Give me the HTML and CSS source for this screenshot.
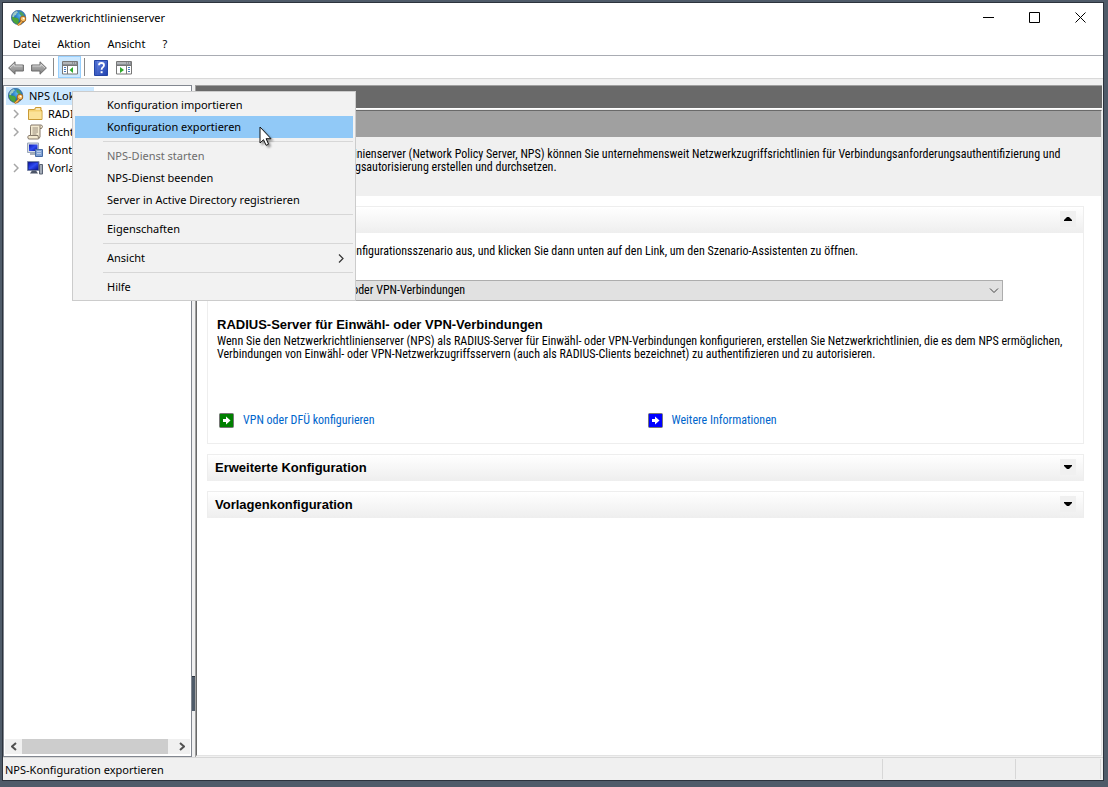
FILE: index.html
```html
<!DOCTYPE html>
<html lang="de">
<head>
<meta charset="utf-8">
<title>Netzwerkrichtlinienserver</title>
<link rel="stylesheet" href="styles.css">
</head>
<body>
<svg class="defs" aria-hidden="true">
  <defs>
    <radialGradient id="sea" cx="60%" cy="35%" r="75%"><stop offset="0" stop-color="#5db8ee"/><stop offset=".5" stop-color="#1f6fbe"/><stop offset="1" stop-color="#123c80"/></radialGradient>
    <linearGradient id="arrow" x1="0" y1="0" x2="0" y2="1"><stop offset="0" stop-color="#c4c4c4"/><stop offset="1" stop-color="#7d7d7d"/></linearGradient>
    <linearGradient id="help" x1="0" y1="0" x2="1" y2="1"><stop offset="0" stop-color="#6d8be6"/><stop offset="1" stop-color="#1d3fae"/></linearGradient>
    <linearGradient id="screen" x1="0" y1="0" x2="1" y2="1"><stop offset="0" stop-color="#0a17b0"/><stop offset=".5" stop-color="#2f4cf0"/><stop offset="1" stop-color="#0712a0"/></linearGradient>
    <symbol id="globe" viewBox="0 0 16 16">
      <circle cx="7.500" cy="7.500" r="7.200" fill="url(#sea)" stroke="#35628e" stroke-width=".6"/>
      <path d="M3 2.500Q4.500 1.200 6 1L7 2.500 5.500 3.500 5 5 3.500 5.500 3 7.500 1 7Q1.200 4 3 2.500z" fill="#9cc9c4"/>
      <path d="M1 6.500l2.500 1 3 .5 1.500 2L7 14.500Q2.500 13.500 1 9z" fill="#4aa43a"/>
      <path d="M8.500 1.500l2 .500 2 2 .500 2-2 .500-2.500-2.500z" fill="#4e9f5a"/>
      <circle cx="12" cy="9" r="2.800" fill="#f9c36a" stroke="#a9661b"/>
      <circle cx="12.600" cy="8.400" r=".9" fill="#fff"/>
      <path d="M10.300 10.700l-4 4 1.300 1 1.400-1.200.8.300.5-1.600 1.900-1.300z" fill="#f5b04c" stroke="#a9661b" stroke-width=".7"/>
    </symbol>
    <symbol id="back" viewBox="0 0 16 14">
      <path d="M.6 7L7 .8V4h8.400v6H7v3.200z" fill="url(#arrow)" stroke="#6b6b6b"/>
      <path d="M2 7l4-3.800V5h8.400" fill="none" stroke="#ddd" stroke-width=".8"/>
    </symbol>
    <symbol id="pane" viewBox="0 0 16 14">
      <path d="M.5 .5h15v12.500H.5z" fill="#fff" stroke="#777"/>
      <path d="M1 1h14v3H1z" fill="#8b8f94"/>
      <path d="M1 2h9M11 2h1M13 2h1" stroke="#eee" stroke-width=".8"/>
      <path d="M5.500 5v8M1 4.500h14" stroke="#777"/>
      <path d="M2 6.500h2M2 8.500h2M2 10.500h2" stroke="#4779bd"/>
    </symbol>
    <symbol id="chev" viewBox="0 0 6 10"><path d="M1 1l4 4-4 4" fill="none" stroke="currentColor" stroke-width="1.500"/></symbol>
  </defs>
</svg>
<div class="window">
  <header class="titlebar">
    <svg class="icon"><use href="#globe"/></svg>
    <h1 class="title">Netzwerkrichtlinienserver</h1>
    <button class="winbtn" aria-label="Minimieren"><svg width="11" height="11"><path d="M0 5.500h11" stroke="#000"/></svg></button>
    <button class="winbtn" aria-label="Maximieren"><svg width="11" height="11"><path d="M.5 .5h10v10H.5z" fill="none" stroke="#000"/></svg></button>
    <button class="winbtn" aria-label="Schließen"><svg width="11" height="11"><path d="M.5 .5l10 10M10.500 .5l-10 10" stroke="#000"/></svg></button>
  </header>
  <nav class="menubar">
    <button>Datei</button><button>Aktion</button><button>Ansicht</button><button>?</button>
  </nav>
  <div class="toolbar">
    <button class="tool" aria-label="Zurück"><svg width="16" height="14"><use href="#back"/></svg></button>
    <button class="tool" aria-label="Vorwärts"><svg class="flip" width="16" height="14"><use href="#back"/></svg></button>
    <span class="divider"></span>
    <button class="tool pressed" aria-label="Konsolenstruktur"><svg width="16" height="14"><use href="#pane"/><path d="M11 6v6L7.500 9z" fill="#2fa82c"/></svg></button>
    <span class="divider"></span>
    <button class="tool" aria-label="Hilfe"><svg width="14" height="16" viewBox="0 0 14 16"><path d="M.5 .5h13v15H.5z" fill="url(#help)" stroke="#2545a5"/><path d="M2 1v14" stroke="#3355bb"/><path d="M5 5.200Q5 3 7.500 3T10 5.300Q10 6.500 8.600 7.400 7.600 8 7.600 9.800" fill="none" stroke="#fff" stroke-width="1.800"/><path d="M6.600 11.200h2v2h-2z" fill="#fff"/></svg></button>
    <button class="tool" aria-label="Aktionsbereich"><svg width="16" height="14"><path d="M.5 .5h15v12.500H.5z" fill="#fff" stroke="#777"/><path d="M1 1h14v3H1z" fill="#8b8f94"/><path d="M1 2h9M11 2h1M13 2h1" stroke="#eee" stroke-width=".8"/><path d="M10.500 5v8M1 4.500h14" stroke="#777"/><path d="M12 6.500h2M12 8.500h2M12 10.500h2" stroke="#4779bd"/><path d="M4 6v6l4-3z" fill="#2fa82c"/></svg></button>
  </div>
  <main class="work">
    <aside class="tree">
      <ul class="nodes">
        <li class="node root"><svg class="icon"><use href="#globe"/></svg><span>NPS (Lokal)</span></li>
        <li class="node"><svg class="chev"><use href="#chev"/></svg><svg class="icon" viewBox="0 0 16 16"><path d="M1.500 3.500h6l1-2h5.500v3h1v9h-13.500z" fill="#f3cf70" stroke="#c99a35"/><path d="M2 5.500h12.500V13H2z" fill="#fbe297"/><path d="M9 3h4" stroke="#fff"/></svg><span>RADIUS-Clients</span></li>
        <li class="node"><svg class="chev"><use href="#chev"/></svg><svg class="icon" viewBox="0 0 16 16"><path d="M4 1h10.500l1 1.500-1 2H13V13l-1.500 2H1.500L.7 13l1-1.500H3.500V2.500z" fill="#f4ead0" stroke="#85796a"/><path d="M3.500 11.500H11l.5 3M13 4.500V1.500" fill="none" stroke="#85796a"/><path d="M5.500 4h5.500M5.500 6h5.500M5.500 8h5.500M5.500 10h4" stroke="#8e8575" stroke-width=".9"/></svg><span>Richtlinien</span></li>
        <li class="node"><span class="chev"></span><svg class="icon" viewBox="0 0 16 16"><path d="M.5 1h11v9.500H.5z" fill="#d6dce5" stroke="#9ba7b8"/><path d="M2 2.500h8.500v6.500H2z" fill="url(#screen)"/><path d="M3 12h6" stroke="#a8b0bb" stroke-width="2"/><path d="M8.500 7.500h7v7h-7z" fill="#7fa0d2" stroke="#456aa4"/><path d="M10 9.500h4M10 11.500h4" stroke="#b9cdea"/></svg><span>Kontoführung</span></li>
        <li class="node"><svg class="chev"><use href="#chev"/></svg><svg class="icon" viewBox="0 0 16 16"><path d="M.5 1.500h11.500v9H.5z" fill="#1a237e" stroke="#7c88a8"/><path d="M1.500 2.500H11V9.500H1.500z" fill="url(#screen)"/><path d="M5 10.500h4l2 3H3z" fill="#4c5568"/><path d="M12.500 4.500h3v9.500h-3z" fill="#a3abb7" stroke="#596273"/></svg><span>Vorlagenverwaltung</span></li>
      </ul>
      <div class="scrollbar">
        <button aria-label="Nach links"><svg class="flip" width="6" height="9"><path d="M1 1l4 3.500L1 8" fill="none" stroke="#505050" stroke-width="2"/></svg></button>
        <div class="track"><div class="thumb"></div></div>
        <button aria-label="Nach rechts"><svg width="6" height="9"><path d="M1 1l4 3.500L1 8" fill="none" stroke="#505050" stroke-width="2"/></svg></button>
      </div>
    </aside>
    <div class="splitter"><div class="grip"></div></div>
    <section class="details">
      <div class="band"></div>
      <div class="page">
        <div class="band2"></div>
        <p class="intro">Mit dem Netzwerkrichtlinienserver (Network Policy Server, NPS) können Sie unternehmensweit Netzwerkzugriffsrichtlinien für Verbindungsanforderungsauthentifizierung und Verbindungsanforderungsautorisierung erstellen und durchsetzen.</p>
        <div class="panels">
          <section class="panel">
            <div class="panelhead"><h2 class="hot">Standardkonfiguration</h2><button class="toggle" aria-label="Zuklappen"><svg width="8" height="4"><path d="M0 4V3L3 0h2l3 3v1z"/></svg></button></div>
            <div class="panelbody">
              <label for="scenario">Wählen Sie in der Liste ein Konfigurationsszenario aus, und klicken Sie dann unten auf den Link, um den Szenario-Assistenten zu öffnen.</label>
              <div class="combo">
                <select id="scenario"><option>RADIUS-Server für Einwähl- oder VPN-Verbindungen</option></select>
                <svg width="10" height="6"><path d="M1 .5l4 4 4-4" fill="none" stroke="#444"/></svg>
              </div>
              <h3>RADIUS-Server für Einwähl- oder VPN-Verbindungen</h3>
              <p class="desc">Wenn Sie den Netzwerkrichtlinienserver (NPS) als RADIUS-Server für Einwähl- oder VPN-Verbindungen konfigurieren, erstellen Sie Netzwerkrichtlinien, die es dem NPS ermöglichen, Verbindungen von Einwähl- oder VPN-Netzwerkzugriffsservern (auch als RADIUS-Clients bezeichnet) zu authentifizieren und zu autorisieren.</p>
              <div class="links">
                <a href="#vpn"><svg width="15" height="15"><rect x=".5" y=".5" width="14" height="14" rx="1" fill="#008000" stroke="#777"/><path d="M4 6h3V3.500L11.500 7.500 7 11.500V9H4z" fill="#fff"/></svg>VPN oder DFÜ konfigurieren</a>
                <a href="#info"><svg width="15" height="15"><rect x=".5" y=".5" width="14" height="14" rx="1" fill="#0000ff" stroke="#777"/><path d="M4 6h3V3.500L11.500 7.500 7 11.500V9H4z" fill="#fff"/></svg>Weitere Informationen</a>
              </div>
            </div>
          </section>
          <section class="panel closed">
            <div class="panelhead"><h2>Erweiterte Konfiguration</h2><button class="toggle" aria-label="Aufklappen"><svg width="8" height="4"><path d="M0 0v1l3 3h2l3-3V0z"/></svg></button></div>
          </section>
          <section class="panel closed">
            <div class="panelhead"><h2>Vorlagenkonfiguration</h2><button class="toggle" aria-label="Aufklappen"><svg width="8" height="4"><path d="M0 0v1l3 3h2l3-3V0z"/></svg></button></div>
          </section>
        </div>
      </div>
    </section>
  </main>
  <footer class="status"><span class="message">NPS-Konfiguration exportieren</span><span class="cell wide"></span><span class="cell last"></span></footer>
</div>
<div class="context" role="menu">
  <button role="menuitem">Konfiguration importieren</button>
  <button role="menuitem" class="active">Konfiguration exportieren</button>
  <hr>
  <button role="menuitem" disabled>NPS-Dienst starten</button>
  <button role="menuitem">NPS-Dienst beenden</button>
  <button role="menuitem">Server in Active Directory registrieren</button>
  <hr>
  <button role="menuitem">Eigenschaften</button>
  <hr>
  <button role="menuitem">Ansicht<svg width="6" height="9"><path d="M1 .5l4 4-4 4" fill="none" stroke="#333" stroke-width="1.200"/></svg></button>
  <hr>
  <button role="menuitem">Hilfe</button>
</div>
<svg class="pointer" width="14" height="22" viewBox="0 0 14 22"><path d="M1 1v16l3.500-3.300 2.600 5.600 2.500-1.100-2.500-5.500H12z" fill="#fff" stroke="#111"/></svg>
</body>
</html>
```
FILE: styles.css
```css
* { box-sizing: border-box; }
html, body { height: 100%; margin: 0; }
body {
  display: flex;
  padding: 2px 4px 6px 2px;
  background: #4f5b69;
  color: #000;
  font: 11px/18px "Noto Sans", "Open Sans", sans-serif;
}
button { padding: 0; border: 0; background: none; color: inherit; font: inherit; }
svg { display: block; flex: none; }
h1, h2, h3, p, ul { margin: 0; padding: 0; }
.defs { position: absolute; width: 0; height: 0; }
.icon { width: 16px; height: 16px; }
.flip { transform: scaleX(-1); }
.window {
  flex: 1;
  min-width: 0;
  display: flex;
  flex-direction: column;
  border: 1px solid #2c333d;
  background: #f0f0f0;
}
.titlebar { display: flex; align-items: center; height: 29px; padding-left: 8px; background: #fff; }
.title { flex: 1; padding-left: 5px; font-size: 11px; font-weight: 400; }
.winbtn { display: flex; align-items: center; justify-content: center; width: 46px; height: 29px; }
.menubar { display: flex; gap: 17px; height: 24px; padding: 3px 10px; border-bottom: 1px solid #a9acb3; background: #fff; }
.toolbar { display: flex; align-items: center; height: 23px; padding-left: 1px; border-bottom: 1px solid #d9d9d9; background: #fff; }
.tool { display: flex; align-items: center; justify-content: center; width: 23px; height: 22px; padding-top: 2px; }
.pressed { border: 1px solid #99d1ff; background: #cce8ff; }
.divider { width: 1px; height: 18px; margin: 0 4px 0 3px; background: #8a8a8a; }
.work { flex: 1; min-height: 0; display: flex; padding-top: 6px; }
.tree {
  flex: none;
  display: flex;
  flex-direction: column;
  justify-content: space-between;
  width: 189px;
  padding: 1px 1px 2px;
  border: 1px solid #828790;
  background: #fff;
  overflow: hidden;
}
.nodes { list-style: none; }
.node { display: flex; align-items: center; height: 18px; padding-left: 8px; white-space: nowrap; }
.node span:last-child { padding-left: 5px; }
.root { width: 88px; margin-left: 1px; padding-left: 2px; background: #cce8ff; overflow: hidden; }
.chev { width: 6px; height: 10px; margin-right: 8px; color: #a6a6a6; }
.scrollbar { display: flex; height: 15px; background: #f0f0f0; }
.scrollbar button { display: flex; align-items: center; justify-content: center; width: 17px; }
.track { flex: 1; }
.thumb { width: 97%; height: 100%; background: #cdcdcd; }
.splitter { display: flex; flex-direction: column; justify-content: flex-end; width: 3px; padding-bottom: 46px; }
.grip { height: 35px; border-top: 1px solid #2c333d; background: #4f5b69; }
.details {
  flex: 1;
  min-width: 0;
  display: flex;
  flex-direction: column;
  margin-right: 1px;
  padding-bottom: 1px;
  border-top: 1px solid #a0a0a0;
  border-left: 1px solid #a0a0a0;
  font: 12px/13px "Roboto Condensed", Roboto, Arial, sans-serif;
}
.band { height: 23px; border-bottom: 1px solid #fff; background: #696969; }
.page {
  flex: 1;
  border: 1px solid #696969;
  border-right-color: #e3e3e3;
  border-bottom-color: #e3e3e3;
  margin-top: 1px;
  background: #fff;
}
.band2 { height: 26px; background: #a0a0a0; }
.intro { height: 59px; padding: 11px 30px 0 47px; background: #f0f0f0; }
.panels { display: flex; flex-direction: column; gap: 10px; padding: 10px 17px 0 10px; }
.panel { border: 1px solid #eee; }
.closed { border-bottom: 0; }
.panelhead { display: flex; align-items: center; justify-content: space-between; height: 26px; padding: 0 7px 2px; background: linear-gradient(#fff, #eee); }
h2, h3 { font: bold 13px/15px "Liberation Sans", Arial, sans-serif; }
.hot { color: #00469b; }
.toggle { display: flex; align-items: center; justify-content: center; width: 16px; height: 16px; background: #f0f0f0; }
.panelbody { padding: 12px 7px 15px 9px; }
label { display: block; }
.combo { display: grid; align-items: center; margin: 22px 73px 16px 0; }
.combo select {
  grid-area: 1 / 1;
  height: 21px;
  padding: 0 4px;
  border: 1px solid #adadad;
  border-radius: 0;
  background: #e1e1e1;
  appearance: none;
  color: #000;
  font: inherit;
}
.combo svg { grid-area: 1 / 1; justify-self: end; margin-right: 4px; pointer-events: none; }
.desc { padding-top: 3px; }
.links { display: grid; grid-template-columns: 1fr 1fr; padding: 52px 0 0 2px; }
.links a { display: flex; align-items: center; gap: 9px; color: #0066cc; text-decoration: none; }
.status { display: flex; height: 23px; border-top: 1px solid #d7d7d7; }
.message { flex: 1; padding: 3px 2px 1px; }
.cell { margin: 1px 0; border-left: 1px solid #d7d7d7; }
.wide { width: 133px; }
.last { width: 86px; margin-right: 2px; border-right: 1px solid #d7d7d7; }
.context {
  position: absolute;
  left: 72px;
  top: 91px;
  width: 284px;
  padding: 2px;
  border: 1px solid #ccc;
  background: #f2f2f2;
}
.context button { display: flex; align-items: center; justify-content: space-between; width: 100%; height: 22px; padding: 0 9px 0 32px; }
.context button:disabled { color: #6d6d6d; }
.context .active { background: #91c9f7; }
.context hr { height: 1px; margin: 3px 0 3px 28px; border: 0; background: #d7d7d7; }
.pointer { position: absolute; left: 259px; top: 126px; filter: drop-shadow(2px 2px 1px #0006); }
```
